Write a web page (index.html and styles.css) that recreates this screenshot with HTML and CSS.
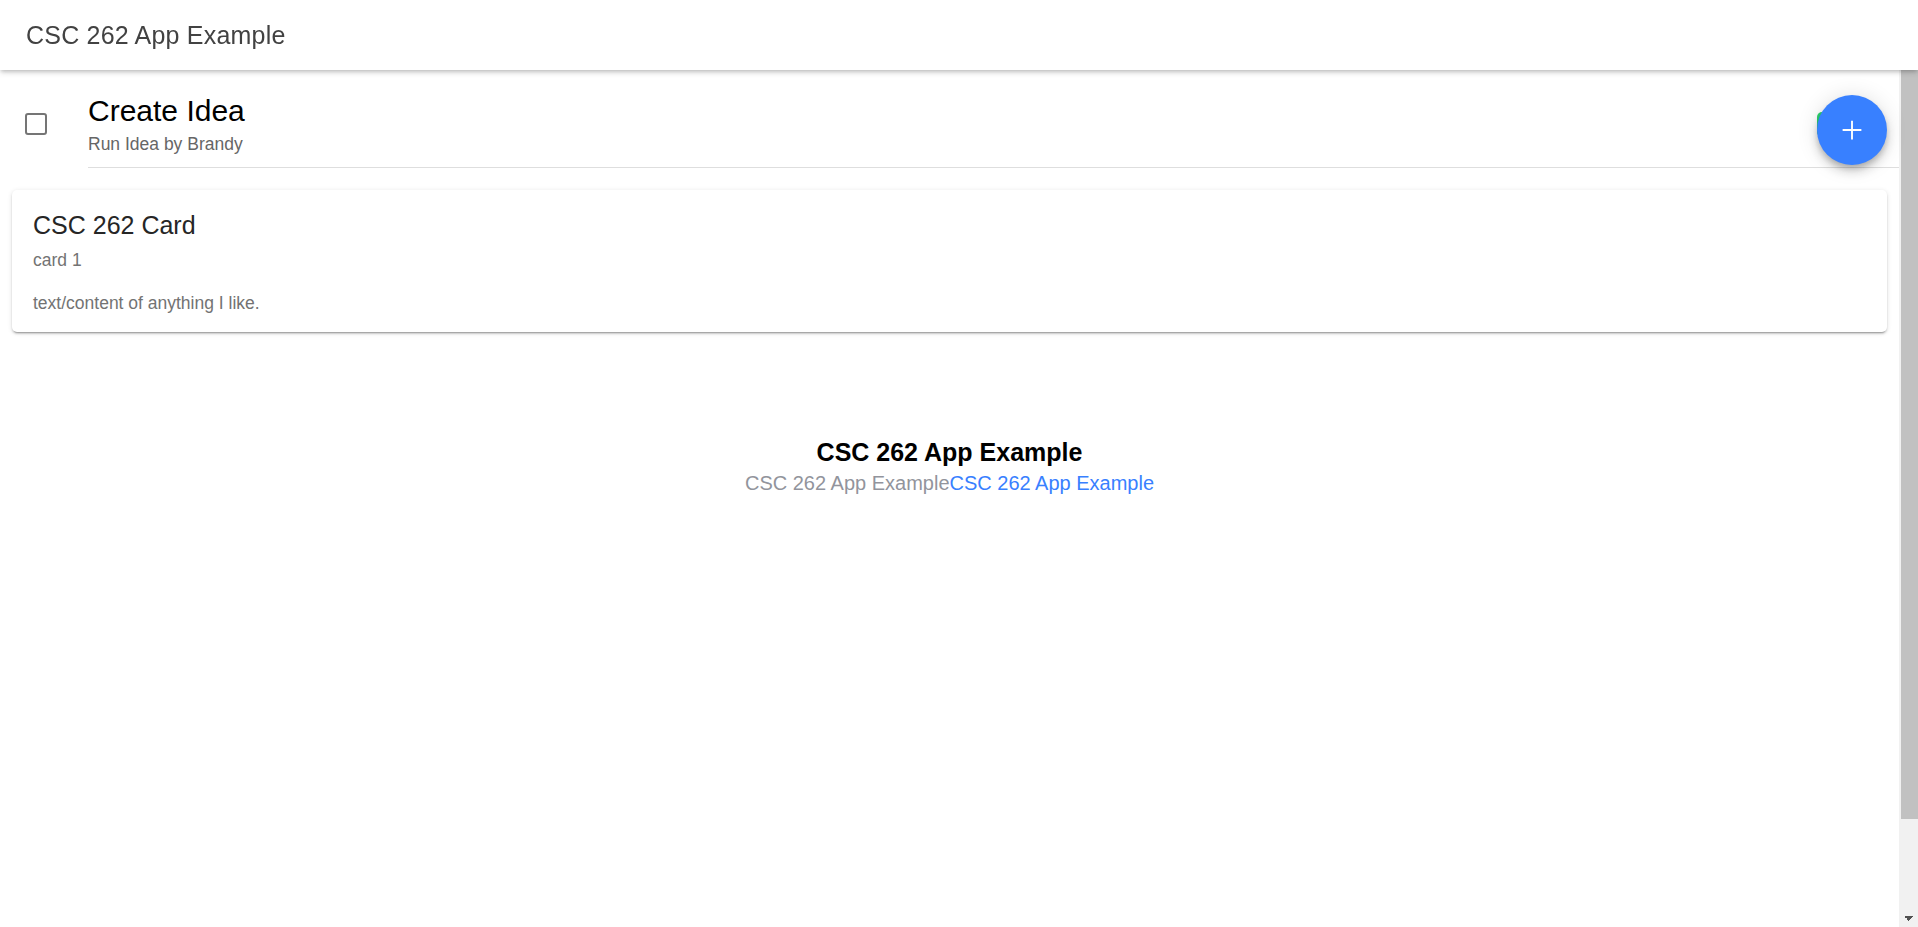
FILE: index.html
```html
<!DOCTYPE html>
<html lang="en">
<head>
<meta charset="utf-8">
<title>CSC 262 App Example</title>
<link rel="stylesheet" href="styles.css">
</head>
<body>
  <header class="toolbar">
    <div class="toolbar-title">CSC 262 App Example</div>
  </header>

  <div class="viewport">
    <main class="page">
      <div class="item">
        <span class="checkbox"></span>
        <div class="item-inner">
          <div class="label">
            <h2 class="label-title">Create Idea</h2>
            <p class="label-sub">Run Idea by Brandy</p>
          </div>
          <span class="badge"></span>
        </div>
      </div>

      <section class="card">
        <div class="card-header">
          <div class="card-title">CSC 262 Card</div>
          <div class="card-subtitle">card 1</div>
        </div>
        <div class="card-content">text/content of anything I like.</div>
      </section>

      <footer class="footer">
        <div class="footer-title">CSC 262 App Example</div>
        <div class="footer-sub"><span class="muted">CSC 262 App Example</span><a class="link" href="#">CSC 262 App Example</a></div>
      </footer>
    </main>

    <div class="scrollbar" aria-hidden="true">
      <div class="sb-button"></div>
      <div class="sb-thumb"></div>
      <div class="sb-track"></div>
      <div class="sb-button sb-down"></div>
    </div>
  </div>

  <button class="fab" type="button" aria-label="Add">
    <svg width="30" height="30" viewBox="0 0 512 512" aria-hidden="true">
      <path d="M256 112v288M400 256H112" fill="none" stroke="#fff" stroke-width="32" stroke-linecap="square"/>
    </svg>
  </button>
</body>
</html>
```

FILE: styles.css
```css
* { box-sizing: border-box; }

html, body {
  margin: 0;
  padding: 0;
  height: 100%;
  overflow: hidden;
  background: #fff;
  font-family: "Liberation Sans", Arial, sans-serif;
}

.toolbar {
  position: fixed;
  top: 0;
  left: 0;
  right: 0;
  height: 70px;
  background: #fff;
  z-index: 10;
  display: flex;
  align-items: center;
  padding: 0 25px 0 26px;
  box-shadow: 0 2px 4px -1px rgba(0,0,0,0.2), 0 4px 5px 0 rgba(0,0,0,0.08), 0 1px 8px 0 rgba(0,0,0,0.06);
}

.toolbar-title {
  font-size: 25px;
  font-weight: 500;
  letter-spacing: 0.2px;
  color: #424242;
}

.viewport {
  display: flex;
  height: 100vh;
}

.page {
  flex: 1;
  min-width: 0;
  padding-top: 70px;
}

/* drawn scrollbar */
.scrollbar {
  flex: none;
  width: 19px;
  display: flex;
  flex-direction: column;
  background: #f1f1f1;
}

.sb-button {
  flex: none;
  height: 19px;
}

.sb-thumb {
  flex: none;
  height: 800px;
  margin-left: 2px;
  background: #c1c1c1;
}

.sb-track {
  flex: 1;
}

.sb-down {
  background-image:
    linear-gradient(to top right, transparent 50%, #505050 50%),
    linear-gradient(to top left, transparent 50%, #505050 50%);
  background-size: 5px 5px, 5px 5px;
  background-position: 5px 8px, 10px 8px;
  background-repeat: no-repeat;
}

/* list item */
.item {
  display: flex;
  align-items: flex-start;
  padding-left: 25px;
  background: #fff;
}

.checkbox {
  flex: none;
  width: 22px;
  height: 22px;
  margin-top: 43px;
  margin-right: 41px;
  border: 2px solid #757575;
  border-radius: 3px;
}

.item-inner {
  flex: 1;
  display: flex;
  align-items: center;
  padding: 24px 20px 12px 0;
  border-bottom: 1px solid #dedede;
}

.label {
  flex: 1;
}

.label-title {
  margin: 0;
  font-size: 30px;
  line-height: 34px;
  font-weight: normal;
  color: #000;
}

.label-sub {
  margin: 6px 0 0;
  font-size: 17.5px;
  line-height: 21px;
  color: #666;
}

.badge {
  flex: none;
  width: 62px;
  height: 25px;
  border-radius: 5px;
  background: #2dd36f;
}

/* card */
.card {
  margin: 22px 12px 0 12px;
  background: #fff;
  border-radius: 5px;
  box-shadow: 0 3px 1px -2px rgba(0,0,0,0.2), 0 2px 2px 0 rgba(0,0,0,0.14), 0 1px 5px 0 rgba(0,0,0,0.12);
}

.card-header {
  padding: 20px 20px 20px 21px;
}

.card-title {
  font-size: 25px;
  line-height: 30px;
  color: #262626;
}

.card-subtitle {
  margin-top: 10px;
  font-size: 17.5px;
  line-height: 20px;
  color: #737373;
}

.card-content {
  padding: 0 20px 16px 21px;
  font-size: 17.5px;
  line-height: 26px;
  color: #737373;
}

/* footer */
.footer {
  margin-top: 106px;
  text-align: center;
}

.footer-title {
  font-size: 25px;
  line-height: 29px;
  font-weight: bold;
  color: #000;
}

.footer-sub {
  margin-top: 5px;
  font-size: 20px;
  line-height: 23px;
}

.muted { color: #92949c; }

.link {
  color: #3880ff;
  text-decoration: none;
}

/* floating action button */
.fab {
  position: fixed;
  top: 95px;
  left: 1817px;
  width: 70px;
  height: 70px;
  padding: 0;
  border: none;
  border-radius: 50%;
  background: #3880ff;
  display: flex;
  align-items: center;
  justify-content: center;
  z-index: 5;
  box-shadow: 0 4px 6px -1px rgba(0,0,0,0.2), 0 7px 12px 0 rgba(0,0,0,0.14), 0 1px 22px 0 rgba(0,0,0,0.12);
}
```
